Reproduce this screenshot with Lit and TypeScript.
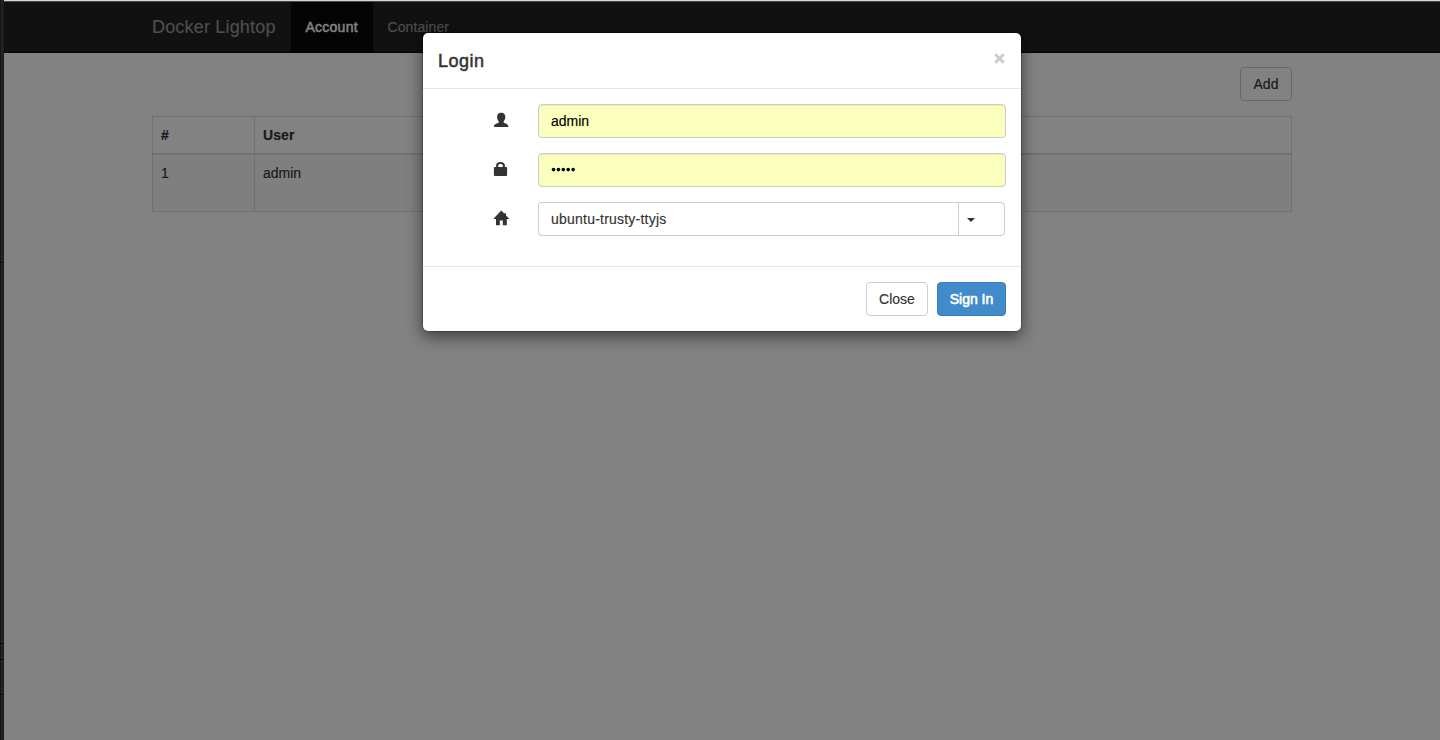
import { LitElement, html, css, svg } from "lit";
import { customElement } from "lit/decorators.js";

const userIcon = svg`<path d="M7.2 -.2C10 -.2 11.4 1.5 11.3 4C11.3 6 10.6 7.4 9.6 8.4V9.6C10 10.4 13.5 10.9 14 12.2C14.3 12.9 14.3 14 14.3 14H0S0 12.9 .3 12.2C.8 10.9 4.4 10.4 4.8 9.6V8.4C3.8 7.4 3.1 6 3.1 4C3 1.5 4.4 -.2 7.2 -.2Z"/>`;
const lockIcon = svg`<path fill-rule="evenodd" d="M2.1 5V3.7C2.1 1.3 3.6 0 6.5 0S10.9 1.3 10.9 3.7V5H12.2C12.8 5 13.1 5.4 13.1 5.9V13.1C13.1 13.7 12.8 14 12.2 14H.8C.2 14 -.1 13.7 -.1 13.1V5.9C-.1 5.4.2 5 .8 5ZM4.2 5H8.8V3.9C8.8 2.6 8 2 6.5 2S4.2 2.6 4.2 3.9Z"/>`;
const homeIcon = svg`<path d="M7.3 -.4L10.3 2.6V2.2H12V4.4L15 7.4V8H12.8V14.2H8.8V9.4H5.8V14.2H2V8H-.3V7.4Z"/>`;

@customElement("app-root")
export class AppRoot extends LitElement {
  static styles = css`
    :host { display: block; height: 740px; font: 14px/20px "Helvetica Neue", "Liberation Sans", Arial, sans-serif; color: #333; }
    * { box-sizing: border-box; }
    .screen { display: grid; grid-template-columns: 4px 1fr; height: 740px; overflow: hidden; position: relative; -webkit-text-stroke-width: .15px; }
    .edge { background: linear-gradient(90deg, #171613 0 1px, #24231f 1px 3px, #1b1a17 3px); display: flex; flex-direction: column; }
    .notch { border-bottom: 1px solid #080807; }
    .n1 { height: 263px; } .n2 { height: 381px; } .n3 { height: 16px; } .n4 { height: 35px; }
    .page { background: #fff; display: flex; flex-direction: column; position: relative; }
    .chrome { height: 2px; background: linear-gradient(#d5d8d7 50%, #4c4c4c 50%); }
    .view { flex: 1; position: relative; }
    .navbar { height: 51px; background: #222; border-bottom: 1px solid #080808; padding-left: 148px; display: flex; color: #999; line-height: 50px; }
    .brand { width: 139px; font-size: 18px; letter-spacing: .18px; white-space: nowrap; }
    .tab { padding: 0 14.5px; height: 50px; letter-spacing: .1px; }
    .active { width: 82px; background: #080808; color: #fff; -webkit-text-stroke: .45px #fff; letter-spacing: .25px; }
    .content { width: 1140px; margin-left: 148px; padding-top: 14px; }
    .toolbar { display: flex; justify-content: flex-end; margin-bottom: 15px; }
    .btn { font: inherit; color: #333; background: #fff; border: 1px solid #ccc; border-radius: 4px; height: 34px; padding: 6px 0; text-align: center; }
    .add { width: 52px; }
    .table { width: 1140px; border-collapse: separate; border-spacing: 0; table-layout: fixed; border: 1px solid #ddd; }
    th, td { text-align: left; vertical-align: top; padding: 8px; border-left: 1px solid #ddd; }
    th:first-child, td:first-child { width: 101px; border-left: 0; }
    th { height: 38px; border-bottom: 2px solid #ddd; letter-spacing: .1px; }
    td { height: 56px; background: #f9f9f9; }
    .backdrop { position: absolute; inset: 0; background: rgba(0, 0, 0, .49); }
    .modal { position: absolute; left: 422px; top: 32px; width: 600px; height: 300px; background: #fff; background-clip: padding-box; border: 1px solid rgba(0, 0, 0, .2); border-radius: 6px; box-shadow: 0 5px 15px rgba(0, 0, 0, .5); }
    .head { height: 56px; padding: 15px; border-bottom: 1px solid #e5e5e5; display: flex; justify-content: space-between; }
    .title { margin: 0; font-size: 18px; line-height: 26px; font-weight: 400; letter-spacing: .5px; -webkit-text-stroke: .5px #333; }
    .close { width: 11px; height: 11px; margin: 5px 1px 0 0; stroke: #ccc; stroke-width: 3; }
    .body { height: 177px; padding: 15px 15px 0; display: flex; flex-direction: column; gap: 15px; }
    .row { display: grid; grid-template-columns: 100px 468px; height: 34px; }
    .icon { margin: 9px 0 0 55.7px; width: 15px; height: 15px; fill: #333; overflow: visible; }
    .field { height: 34px; font: inherit; color: #000; border: 1px solid #ccc; border-radius: 4px; padding: 6px 12px; background: #faffbd; box-shadow: inset 0 1px 1px rgba(0, 0, 0, .075); }
    .dots { display: block; width: 26px; height: 20px; fill: #000; }
    .combo { width: 467px; display: flex; }
    .choice { width: 420px; background: #fff; color: #333; letter-spacing: .22px; border-right: 0; border-radius: 4px 0 0 4px; box-shadow: none; }
    .drop { width: 47px; border: 1px solid #ccc; border-radius: 0 4px 4px 0; padding: 15px 0 0 8px; }
    .caret { width: 0; height: 0; border: 4px solid transparent; border-top-color: #333; border-bottom: 0; }
    .foot { border-top: 1px solid #e5e5e5; padding: 15px; display: flex; justify-content: flex-end; gap: 9px; }
    .dismiss { width: 62px; }
    .primary { width: 69px; background: #428bca; border-color: #357ebd; color: #fff; -webkit-text-stroke: .6px #fff; }
  `;

  render() {
    return html`
      <div class="screen">
        <div class="edge"><div class="notch n1"></div><div class="notch n2"></div><div class="notch n3"></div><div class="notch n4"></div></div>
        <div class="page">
          <div class="chrome"></div>
          <div class="view">
            <nav class="navbar"><div class="brand">Docker Lightop</div><div class="tab active">Account</div><div class="tab">Container</div></nav>
            <main class="content">
              <div class="toolbar"><button class="btn add">Add</button></div>
              <table class="table">
                <thead><tr><th>#</th><th>User</th></tr></thead>
                <tbody><tr><td>1</td><td>admin</td></tr></tbody>
              </table>
            </main>
            <div class="backdrop"></div>
          </div>
        </div>
        <section class="modal">
          <header class="head">
            <h4 class="title">Login</h4>
            <svg class="close" viewBox="0 0 11 11"><path d="M1.2 1.2L9.8 9.8M9.8 1.2L1.2 9.8"/></svg>
          </header>
          <div class="body">
            <div class="row"><svg class="icon" viewBox="0 0 15 15">${userIcon}</svg><div class="field">admin</div></div>
            <div class="row"><svg class="icon" viewBox="0 0 15 15">${lockIcon}</svg>
              <div class="field"><svg class="dots" viewBox="0 0 26 20">${[0, 1, 2, 3, 4].map((i) => svg`<circle cx=${2.5 + i * 4.9} cy="9.6" r="1.8"/>`)}</svg></div></div>
            <div class="row"><svg class="icon" viewBox="0 0 15 15">${homeIcon}</svg>
              <div class="combo"><div class="field choice">ubuntu-trusty-ttyjs</div><div class="drop"><div class="caret"></div></div></div></div>
          </div>
          <footer class="foot"><button class="btn dismiss">Close</button><button class="btn primary">Sign In</button></footer>
        </section>
      </div>`;
  }
}
